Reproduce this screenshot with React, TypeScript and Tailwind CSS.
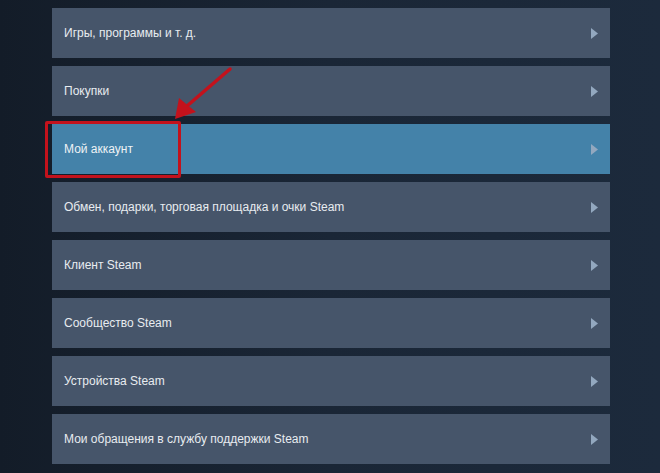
import React from 'react';

const items = [
  'Игры, программы и т. д.',
  'Покупки',
  'Мой аккаунт',
  'Обмен, подарки, торговая площадка и очки Steam',
  'Клиент Steam',
  'Сообщество Steam',
  'Устройства Steam',
  'Мои обращения в службу поддержки Steam',
];

const Chevron = () => (
  <svg width="7" height="11" viewBox="0 0 7 11" className="shrink-0">
    <path d="M0 0 L7 5.5 L0 11 Z" fill="#93a8bf" />
  </svg>
);

const App = () => (
  <div
    className="relative w-[660px] h-[473px] overflow-hidden bg-gradient-to-r from-[#131c28] via-[#1a2636] to-[#1c2a3c]"
    style={{ fontFamily: '"Liberation Sans", Arial, sans-serif' }}
  >
    <div className="flex flex-col gap-2 pl-[52px] pr-[50px] pt-2">
      {items.map((label, i) => (
        <div
          key={label}
          className={
            i === 2
              ? 'flex items-center justify-between h-[50px] pl-3 pr-[12px] bg-[#4482a9] text-[#eef2f5] text-[12px]'
              : 'flex items-center justify-between h-[50px] pl-3 pr-[12px] bg-[#46556a] text-[#e8ecf0] text-[12px]'
          }
        >
          <span>{label}</span>
          <Chevron />
        </div>
      ))}
    </div>

    {/* annotation: red frame */}
    <div className="absolute left-[45px] top-[121px] w-[136px] h-[57px] border-[3px] border-[#c3121c] rounded-[2px]" />

    {/* annotation: arrow */}
    <svg className="absolute left-0 top-0 pointer-events-none" width="660" height="473">
      <line x1="230" y1="69" x2="187" y2="106" stroke="#c3121c" strokeWidth="3.5" strokeLinecap="round" />
      <path d="M175 119 L179 98 L196 112 Z" fill="#c3121c" />
    </svg>
  </div>
);

export default App;
